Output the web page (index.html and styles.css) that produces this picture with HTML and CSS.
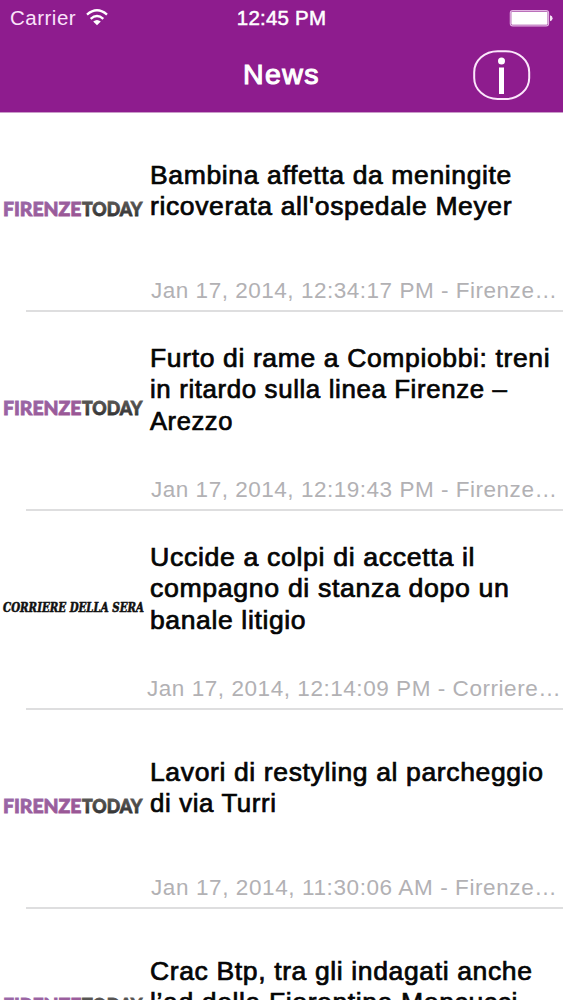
FILE: index.html
```html
<!DOCTYPE html>
<html lang="it">
<head>
<meta charset="utf-8">
<title>News</title>
<link rel="stylesheet" href="styles.css">
</head>
<body>
<svg class="defs" width="0" height="0" aria-hidden="true">
  <defs>
    <linearGradient id="violet" x1="0" y1="0" x2="1" y2="1"><stop offset="0" stop-color="#9a6cab"/><stop offset="1" stop-color="#9a5291"/></linearGradient>
    <linearGradient id="charcoal" x1="0" y1="0" x2="0" y2="1"><stop offset="0" stop-color="#65625f"/><stop offset="1" stop-color="#2c2c2e"/></linearGradient>
    <symbol id="firenze" viewBox="0 0 148 20">
      <text class="ft" x="3" y="16.2" textLength="78.500" lengthAdjust="spacingAndGlyphs" fill="url(#violet)" stroke="url(#violet)">FIRENZE</text>
      <text class="ft" x="82" y="16.200" textLength="60.500" lengthAdjust="spacingAndGlyphs" fill="url(#charcoal)" stroke="url(#charcoal)">TODAY</text>
    </symbol>
    <symbol id="corriere" viewBox="0 0 148 20">
      <text class="cs" x="3" y="14" textLength="141" lengthAdjust="spacingAndGlyphs">CORRIERE DELLA SERA</text>
    </symbol>
  </defs>
</svg>
<header class="header">
  <div class="status">
    <div class="carrier"><span>Carrier</span>
      <svg class="wifi" width="22" height="17" viewBox="0 0 22 17"><g fill="none" stroke="#fff" stroke-width="2.400"><path d="M1 5.600Q11-3 21 5.600"/><path d="M4.700 9.800Q11 4.400 17.300 9.800"/></g><path fill="#fff" d="M7.200 12.600Q11 9.300 14.800 12.600L11 16.300z"/></svg>
    </div>
    <div class="clock">12:45 PM</div>
    <svg class="battery" width="44" height="17" viewBox="0 0 44 17"><rect x="1.300" y=".6" width="38.300" height="15.300" rx="2.500" fill="none" stroke="#e3b5e3" stroke-width="1.100"/><rect x="2.300" y="1.800" width="36.300" height="13" rx="1" fill="#fff"/><path fill="#f5e3f5" d="M41 5.300q2.600.6 2.600 3t-2.600 3z"/></svg>
  </div>
  <div class="navbar">
    <h1 class="heading">News</h1>
    <svg class="info" width="58" height="51" viewBox="0 0 58 51"><rect x="1.200" y="1.200" width="55" height="47.800" rx="23.500" ry="21" fill="none" stroke="#fbe6fb" stroke-width="2"/><circle cx="28.500" cy="11" r="3.500" fill="#fff"/><rect x="26" y="17.500" width="5" height="26.500" fill="#fff"/></svg>
  </div>
</header>
<main class="list">
  <article class="row">
    <svg class="logo"><use href="#firenze"/></svg>
    <div class="content"><h2 class="title"><span>Bambina affetta da meningite</span><span>ricoverata all'ospedale Meyer</span></h2><p class="date">Jan 17, 2014, 12:34:17 PM - Firenze…</p></div>
  </article>
  <article class="row">
    <svg class="logo"><use href="#firenze"/></svg>
    <div class="content"><h2 class="title"><span>Furto di rame a Compiobbi: treni</span><span class="snug">in ritardo sulla linea Firenze –</span><span class="tight">Arezzo</span></h2><p class="date">Jan 17, 2014, 12:19:43 PM - Firenze…</p></div>
  </article>
  <article class="row">
    <svg class="logo"><use href="#corriere"/></svg>
    <div class="content"><h2 class="title"><span class="loose">Uccide a colpi di accetta il</span><span class="loose">compagno di stanza dopo un</span><span>banale litigio</span></h2><p class="date wide">Jan 17, 2014, 12:14:09 PM - Corriere…</p></div>
  </article>
  <article class="row">
    <svg class="logo"><use href="#firenze"/></svg>
    <div class="content"><h2 class="title"><span>Lavori di restyling al parcheggio</span><span class="snug">di via Turri</span></h2><p class="date morning">Jan 17, 2014, 11:30:06 AM - Firenze…</p></div>
  </article>
  <article class="row">
    <svg class="logo"><use href="#firenze"/></svg>
    <div class="content"><h2 class="title"><span>Crac Btp, tra gli indagati anche</span><span>l’ad della Fiorentina Mencucci</span></h2></div>
  </article>
</main>
</body>
</html>
```

FILE: styles.css
```css
* { box-sizing: border-box; }
html { height: 100%; overflow: hidden; }
body { margin: 0; height: 1000px; overflow: hidden; background: #fff; font-family: "Liberation Sans", Arial, sans-serif; }
.defs { display: block; }
.header { height: 113px; background: #8e1c8e; border-bottom: 1px solid #c99bc9; color: #fff; }
.status { display: grid; grid-template-columns: 1fr auto 1fr; height: 36px; padding: 0 10px; font-size: 20.5px; line-height: 36px; }
.carrier { display: flex; align-items: center; gap: 10px; color: #fbe3fb; letter-spacing: .5px; }
.wifi { margin-top: -2px; }
.clock { -webkit-text-stroke: .5px #fff; letter-spacing: .2px; }
.battery { justify-self: end; margin-top: 10px; }
.navbar { display: grid; grid-template-columns: 1fr auto 1fr; height: 76px; padding: 0 32px; }
.heading { grid-column: 2; margin: 0; font-size: 28.500px; font-weight: 400; line-height: 76px; letter-spacing: 1.400px; -webkit-text-stroke: 1.100px #fff; }
.info { justify-self: end; margin-top: 14px; }
.list { height: 887px; overflow: hidden; }
.row { display: grid; grid-template-columns: 150px 1fr; height: 199px; position: relative; }
.row::after { content: ""; position: absolute; left: 26px; right: 0; bottom: 0; height: 2px; background: #dededf; }
.logo { width: 148px; height: 20px; margin-top: 87px; }
.ft { font: 900 19.500px "Lato", sans-serif; stroke-width: .8px; }
.cs { font: italic 700 13.500px "DejaVu Serif", serif; fill: #111; stroke: #111; stroke-width: .6px; }
.title { display: flex; flex-direction: column; justify-content: center; align-items: flex-start; height: 156px; margin: 0; font-size: 25.500px; font-weight: 400; line-height: 31.300px; color: #050505; letter-spacing: .6px; white-space: nowrap; -webkit-text-stroke: .7px #050505; }
.title span { transform: scaleX(1.040); transform-origin: left; }
.title .loose { transform: scaleX(1.048); }
.title .snug { transform: scaleX(1.015); }
.title .tight { transform: none; }
.date { margin: 8px 0 0 1px; font-size: 22.500px; line-height: 28px; color: #b2b1b4; letter-spacing: .52px; white-space: nowrap; }
.wide { margin-left: -3px; letter-spacing: .55px; }
.morning { letter-spacing: .6px; }
```
